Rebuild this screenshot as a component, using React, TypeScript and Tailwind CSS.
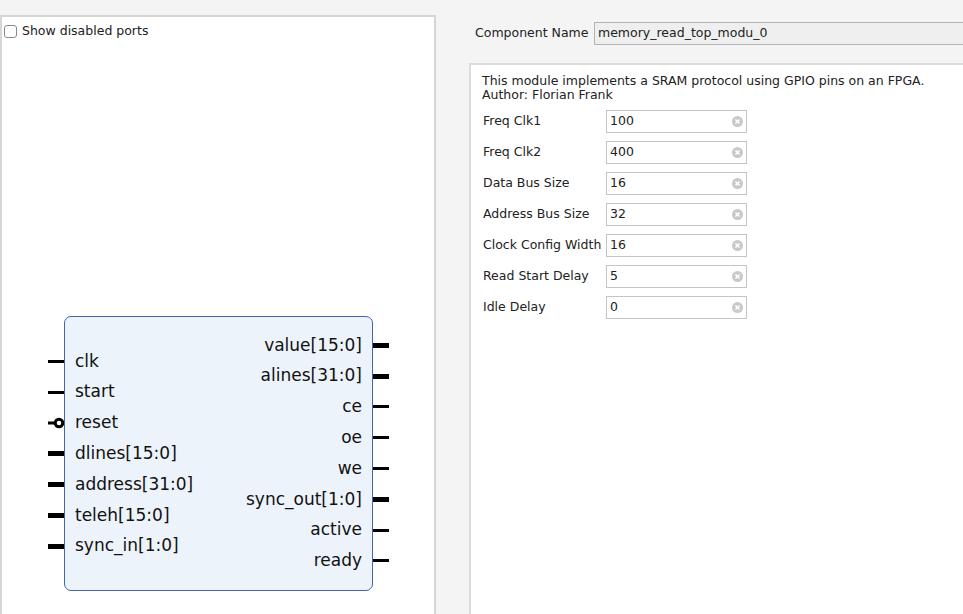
import React from 'react';

interface Port {
  name: string;
  bus?: boolean;
  inverted?: boolean;
}

const inputs: Port[] = [
  { name: 'clk' },
  { name: 'start' },
  { name: 'reset', inverted: true },
  { name: 'dlines[15:0]', bus: true },
  { name: 'address[31:0]', bus: true },
  { name: 'teleh[15:0]', bus: true },
  { name: 'sync_in[1:0]', bus: true },
];

const outputs: Port[] = [
  { name: 'value[15:0]', bus: true },
  { name: 'alines[31:0]', bus: true },
  { name: 'ce' },
  { name: 'oe' },
  { name: 'we' },
  { name: 'sync_out[1:0]', bus: true },
  { name: 'active' },
  { name: 'ready' },
];

const params = [
  { label: 'Freq Clk1', value: '100' },
  { label: 'Freq Clk2', value: '400' },
  { label: 'Data Bus Size', value: '16' },
  { label: 'Address Bus Size', value: '32' },
  { label: 'Clock Config Width', value: '16' },
  { label: 'Read Start Delay', value: '5' },
  { label: 'Idle Delay', value: '0' },
];

const Pin = ({ port }: { port: Port }) => {
  if (port.inverted) {
    return (
      <div className="h-[30.8px] flex items-center">
        <svg width="16" height="14" viewBox="0 0 16 14">
          <line x1="0" y1="7" x2="7" y2="7" stroke="#000" strokeWidth="3" />
          <circle cx="11" cy="7" r="3.8" fill="none" stroke="#000" strokeWidth="3" />
        </svg>
      </div>
    );
  }
  return (
    <div className="h-[30.8px] flex items-center">
      <div className={port.bus ? 'w-4 h-[5px] bg-black' : 'w-4 h-[3px] bg-black'} />
    </div>
  );
};

const ClearIcon = () => (
  <svg width="11" height="11" viewBox="0 0 12 12">
    <circle cx="6" cy="6" r="6" fill="#c9c9c9" />
    <path d="M3.8 3.8 L8.2 8.2 M8.2 3.8 L3.8 8.2" stroke="#fff" strokeWidth="1.6" />
  </svg>
);

const App = () => {
  return (
    <div
      className="w-[963px] h-[614px] overflow-hidden bg-[#f4f4f4] flex text-[12.5px] text-[#222]"
      style={{ fontFamily: '"DejaVu Sans", Verdana, sans-serif' }}
    >
      {/* symbol view */}
      <div className="w-[436px] h-[600px] mt-[15px] bg-white border-2 border-[#d6d6d6] border-b-0 flex flex-col">
        <label className="flex items-center gap-[5px] pl-[2px] pt-[3px] h-[26px]">
          <span className="w-[13px] h-[13px] rounded-[3px] border border-[#8a8a8a] bg-white" />
          <span>Show disabled ports</span>
        </label>
        <div className="flex items-start pl-[46px] pt-[273px]">
          <div className="flex flex-col pt-[30px]">
            {inputs.map((p) => (
              <Pin key={p.name} port={p} />
            ))}
          </div>
          <div className="w-[309px] h-[275px] rounded-[7px] border border-[#4463b0] bg-[#edf3fb] flex justify-between text-[17px] text-[#111]">
            <div className="flex flex-col pt-[29px] pl-[10px]">
              {inputs.map((p) => (
                <div key={p.name} className="h-[30.8px] flex items-center">{p.name}</div>
              ))}
            </div>
            <div className="flex flex-col items-end pt-[13px] pr-[10px]">
              {outputs.map((p) => (
                <div key={p.name} className="h-[30.8px] flex items-center">{p.name}</div>
              ))}
            </div>
          </div>
          <div className="flex flex-col pt-[14px]">
            {outputs.map((p) => (
              <Pin key={p.name} port={p} />
            ))}
          </div>
        </div>
      </div>

      {/* parameters */}
      <div className="flex-1 flex flex-col pl-[33px]">
        <div className="flex items-center h-[22px] mt-[22px] ml-[6px]">
          <span className="w-[119px]">Component Name</span>
          <div className="flex-1 h-[23px] bg-[#efefef] border border-[#b4b4b4] border-r-0 flex items-center pl-[3px]">
            memory_read_top_modu_0
          </div>
        </div>
        <div className="flex-1 mt-[19px] bg-white border-2 border-[#dcdcdc] border-r-0 border-b-0 pl-[11px] pt-[9px]">
          <p className="leading-[14px]">
            This module implements a SRAM protocol using GPIO pins on an FPGA.
            <br />
            Author: Florian Frank
          </p>
          <div className="mt-[8px] flex flex-col gap-[8px] pl-[1px]">
            {params.map((p) => (
              <div key={p.label} className="flex items-center">
                <span className="w-[123px]">{p.label}</span>
                <div className="w-[141px] h-[23px] border border-[#c4c4c4] bg-white flex items-center justify-between pl-[3px] pr-[3px]">
                  <span>{p.value}</span>
                  <ClearIcon />
                </div>
              </div>
            ))}
          </div>
        </div>
      </div>
    </div>
  );
};

export default App;
